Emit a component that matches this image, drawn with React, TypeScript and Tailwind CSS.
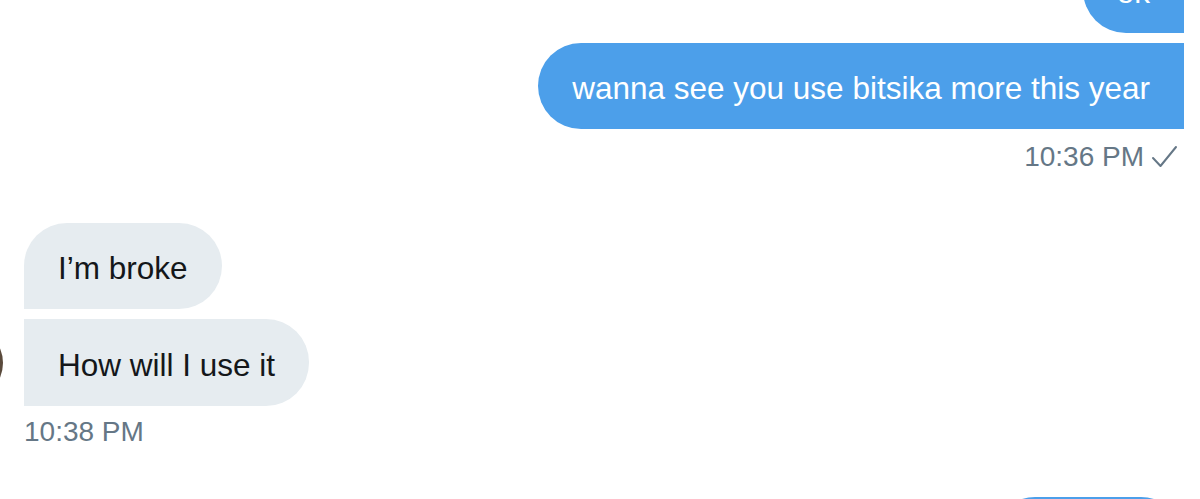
export default function App() {
  return (
    <div className="w-[1200px] h-[499px] overflow-hidden bg-white font-['Liberation_Sans',Arial,sans-serif]">
      <div className="flex flex-col items-end pr-[16px]">
        <div className="-mt-[53px] h-[86px] pl-[34px] pr-[34px] pt-[6px] rounded-l-[43px] bg-[#4c9fea] text-white text-[31.5px] flex items-center">
          ok
        </div>
        <div className="mt-[10px] h-[86px] px-[34px] pt-[6px] rounded-l-[43px] bg-[#4c9fea] text-white text-[31.5px] flex items-center">
          wanna see you use bitsika more this year
        </div>
        <div className="mt-[13px] pr-[6px] h-[30px] flex items-center gap-[7px] text-[28px] text-[#657786]">
          <span>10:36 PM</span>
          <svg width="27" height="24" viewBox="0 0 27 24" fill="none">
            <path d="M2 13 L9.5 21 L25 2" stroke="#657786" strokeWidth="2" strokeLinecap="round" strokeLinejoin="round" />
          </svg>
        </div>
      </div>

      <div className="mt-[51px] pl-[24px] flex flex-col items-start">
        <div className="h-[86px] px-[34px] pt-[6px] rounded-t-[43px] rounded-br-[43px] bg-[#e6ecf0] text-[#14171a] text-[31.5px] flex items-center">
          I’m broke
        </div>
        <div className="mt-[10px] -ml-[95px] flex items-center gap-[21px]">
          <div className="w-[74px] h-[74px] rounded-full bg-[#5a4a3c]" />
          <div className="h-[87px] px-[34px] pt-[6px] rounded-r-[43px] bg-[#e6ecf0] text-[#14171a] text-[31.5px] flex items-center">
            How will I use it
          </div>
        </div>
        <div className="mt-[11px] h-[30px] flex items-center text-[28px] text-[#657786]">
          10:38 PM
        </div>
      </div>

      <div className="mt-[50px] flex justify-end pr-[16px]">
        <div className="w-[192px] h-[86px] rounded-t-[43px] rounded-bl-[43px] bg-[#4c9fea]" />
      </div>
    </div>
  );
}
